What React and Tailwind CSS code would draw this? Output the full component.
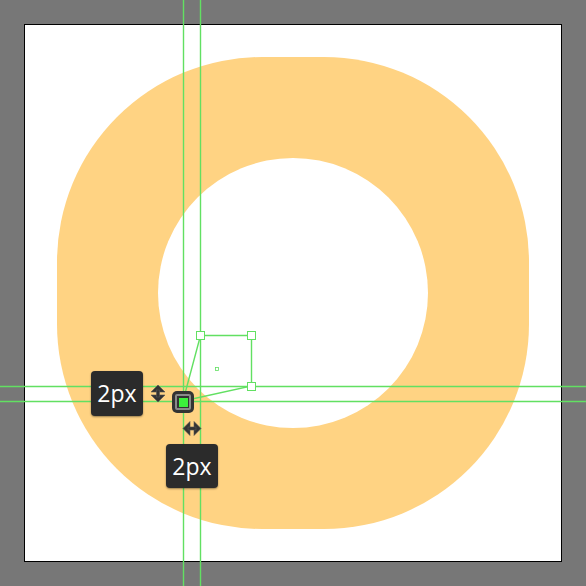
import React from "react";

function Tip({ className }) {
  return (
    <div
      className={`absolute flex items-center justify-center rounded-[4px] bg-[#2b2b2b] text-white text-[23px] leading-none shadow-[0_1px_2px_rgba(0,0,0,0.4)] ${className}`}
      style={{ fontFamily: '"Open Sans", "Noto Sans", sans-serif' }}
    >
      2px
    </div>
  );
}

export default function App() {
  const green = "#62e062";

  return (
    <div className="relative w-[586px] h-[586px] bg-[#777777] p-[24px] overflow-hidden">
      {/* artboard */}
      <div className="w-[538px] h-[538px] bg-white border border-black flex items-center justify-center">
        <div className="w-[472px] h-[472px] rounded-[205px] bg-[#ffd383] flex items-center justify-center">
          <div className="w-[270px] h-[270px] rounded-full bg-white" />
        </div>
      </div>

      {/* guides + selection */}
      <svg className="absolute inset-0" width="586" height="586" viewBox="0 0 586 586">
        <line x1="183.5" y1="0" x2="183.5" y2="586" stroke={green} strokeWidth="1.4" />
        <line x1="200.5" y1="0" x2="200.5" y2="586" stroke={green} strokeWidth="1.4" />
        <line x1="0" y1="386.5" x2="586" y2="386.5" stroke={green} strokeWidth="1.4" />
        <line x1="0" y1="401.5" x2="586" y2="401.5" stroke={green} strokeWidth="1.4" />

        <path
          d="M183 401 L200.5 335.5 L251.5 335.5 L251.5 386 Z"
          fill="none"
          stroke={green}
          strokeWidth="1.4"
        />
        <rect x="196.5" y="331.5" width="8" height="8" fill="white" stroke={green} />
        <rect x="247.5" y="331.5" width="8" height="8" fill="white" stroke={green} />
        <rect x="247.5" y="382.5" width="8" height="8" fill="white" stroke={green} />
        <rect x="215.5" y="367.5" width="3" height="3" fill="white" stroke={green} strokeWidth="0.8" />

        {/* vertical resize arrow */}
        <g fill="#333" stroke="#555" strokeWidth="0.6">
          <path d="M158 385 L165 392 L151 392 Z" />
          <path d="M158 402 L165 395 L151 395 Z" />
          <rect x="156.5" y="390" width="3" height="7" />
        </g>
        {/* horizontal resize arrow */}
        <g fill="#333" stroke="#555" strokeWidth="0.6">
          <path d="M183 428.5 L190 421.5 L190 435.5 Z" />
          <path d="M201 428.5 L194 421.5 L194 435.5 Z" />
          <rect x="188" y="427" width="8" height="3" />
        </g>
      </svg>

      {/* anchor point handle */}
      <div className="absolute left-[172px] top-[391px] w-[22px] h-[22px] rounded-[5px] bg-[#333] p-[3px]">
        <div className="w-full h-full rounded-[2px] border-2 border-[#8a8a8a] bg-[#333] flex items-center justify-center">
          <div className="w-[9px] h-[9px] bg-[#3cf03c]" />
        </div>
      </div>

      <Tip className="left-[91px] top-[371px] w-[52px] h-[45px]" />
      <Tip className="left-[166px] top-[444px] w-[52px] h-[44px]" />
    </div>
  );
}
